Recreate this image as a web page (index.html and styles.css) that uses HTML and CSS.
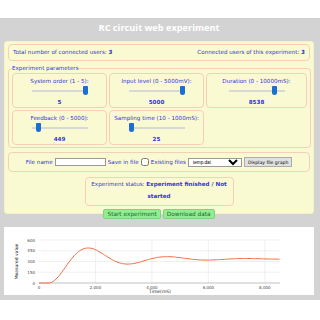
FILE: index.html
```html
<!DOCTYPE html>
<html lang="en">
<head>
    <meta charset="UTF-8">
    <title>RC circuit web experiment</title>
    <link rel="stylesheet" href="styles.css">
</head>
<body>

<div class="page">
    <h1>RC circuit web experiment</h1>

    <div class="panel">
        <div class="box users">
            <span>Total number of connected users: <b>3</b></span>
            <span>Connected users of this experiment: <b>3</b></span>
        </div>

        <fieldset class="params">
            <legend>Experiment parameters</legend>
            <div class="param-grid">
                <div class="param">
                    <label>System order (1 - 5):</label>
                    <input type="range" min="1" max="5" value="5">
                    <b>5</b>
                </div>
                <div class="param">
                    <label>Input level (0 - 5000mV):</label>
                    <input type="range" min="0" max="5000" value="5000">
                    <b>5000</b>
                </div>
                <div class="param">
                    <label>Duration (0 - 10000mS):</label>
                    <input type="range" min="0" max="10000" value="8538">
                    <b>8538</b>
                </div>
                <div class="param">
                    <label>Feedback (0 - 5000):</label>
                    <input type="range" min="0" max="5000" value="449">
                    <b>449</b>
                </div>
                <div class="param">
                    <label>Sampling time (10 - 1000mS):</label>
                    <input type="range" min="10" max="1000" value="25">
                    <b>25</b>
                </div>
            </div>
        </fieldset>

        <div class="box files">
            <label>File name</label>
            <input type="text" class="file-name">
            <label>Save in file</label>
            <input type="checkbox" class="save">
            <label>Existing files</label>
            <select class="existing"><option>temp.dat</option></select>
            <button class="show">Display file graph</button>
        </div>

        <div class="box status">
            Experiment status: <b>Experiment finished / Not started</b>
        </div>
    </div>

    <div class="actions">
        <button class="go">Start experiment</button>
        <button class="go">Download data</button>
    </div>

    <div class="chart">
        <svg id="graph" width="310" height="68" viewBox="0 0 310 68"></svg>
    </div>
</div>

<script>
    // plot area inside the svg
    const plotL = 35, plotR = 276, plotT = 13, plotB = 56;
    const tMax = 8538, yMax = 600;
    const svg = document.getElementById("graph");
    let out = "";

    function px(t) { return plotL + t / tMax * (plotR - plotL); }
    function py(v) { return plotB - v / yMax * (plotB - plotT); }

    // grid + labels
    [0, 150, 300, 450, 600].forEach(v => {
        if (v > 0) out += `<line x1="${plotL}" x2="${plotR}" y1="${py(v)}" y2="${py(v)}" class="grid"/>`;
        out += `<text x="${plotL - 4}" y="${py(v) + 1.5}" class="tick" text-anchor="end">${v}</text>`;
    });
    [0, 2000, 4000, 6000, 8000].forEach(t => {
        if (t > 0) out += `<line x1="${px(t)}" x2="${px(t)}" y1="${plotT}" y2="${plotB}" class="grid"/>`;
        out += `<text x="${px(t)}" y="${plotB + 6}" class="tick" text-anchor="middle">${t.toLocaleString("en-US")}</text>`;
    });
    out += `<line x1="${plotL}" x2="${plotR}" y1="${plotB}" y2="${plotB}" class="axis"/>`;
    out += `<text x="156" y="66" class="title" text-anchor="middle">Time(mS)</text>`;
    out += `<text transform="translate(13.5 ${(plotT + plotB) / 2}) rotate(-90)" class="title" text-anchor="middle">Measured value</text>`;

    // damped response of the circuit
    const w = Math.PI / 1400, a = 0.000555, delay = 340, final = 335;
    let d = "";
    for (let t = 0; t <= tMax; t += 40) {
        const tp = t - delay;
        const v = tp <= 0 ? 0 : final * (1 - Math.exp(-a * tp) * (Math.cos(w * tp) + a / w * Math.sin(w * tp)));
        d += (d ? " L" : "M") + px(t).toFixed(1) + " " + py(v).toFixed(1);
    }
    out += `<path d="${d}" class="curve"/>`;
    svg.innerHTML = out;
</script>

</body>
</html>
```

FILE: styles.css
```css
body {
    margin: 0;
    background: #fff;
    font-family: "DejaVu Sans", sans-serif;
    font-size: 5.6px;
    color: #3333dd;
}
.page {
    margin-top: 18px;
    background: #d3d3d3;
    padding: 0 6px 5px 4px;
}
h1 {
    margin: 0;
    height: 23px;
    line-height: 19px;
    font-family: "Open Sans", sans-serif;
    font-size: 9.2px;
    font-weight: bold;
    color: #fff;
    text-align: center;
}
.panel {
    background: #fafad2;
    border: 1px solid #f3f3c4;
    border-radius: 3px;
    padding: 2px 3px 7px 3px;
}
.box {
    border: 1px solid #f7cfb8;
    border-radius: 4px;
}
.users {
    display: flex;
    justify-content: space-between;
    padding: 4px 4px;
    height: 7px;
    line-height: 7px;
}
.params {
    margin: 4px 0 0 0;
    padding: 2px 3px 2px 3px;
    border: 1px solid #f7cfb8;
    border-radius: 4px;
}
.params legend {
    padding: 0;
    line-height: 6px;
}
.param-grid {
    display: grid;
    grid-template-columns: 95px 95px 101px;
    gap: 2px;
}
.param {
    border: 1px solid #f7cfb8;
    border-radius: 4px;
    height: 35px;
    display: flex;
    flex-direction: column;
    align-items: center;
    padding-top: 4px;
    box-sizing: border-box;
}
.param label {
    line-height: 7px;
}
.param b {
    line-height: 8px;
}
input[type=range] {
    -webkit-appearance: none;
    appearance: none;
    width: 56px;
    height: 10px;
    margin: 1px 0 2px 0;
    background: transparent;
}
input[type=range]::-webkit-slider-runnable-track {
    height: 2px;
    background: #d8d8d8;
}
input[type=range]::-webkit-slider-thumb {
    -webkit-appearance: none;
    width: 5px;
    height: 9px;
    margin-top: -4px;
    background: #1a6fd1;
    border-radius: 1px 1px 3px 3px;
}
.files {
    margin-top: 4px;
    height: 18px;
    display: flex;
    align-items: center;
    justify-content: center;
    gap: 2px;
}
.file-name {
    width: 49px;
    height: 6px;
    border: 1px solid #999;
    padding: 0;
}
.save {
    width: 8px;
    height: 8px;
    margin: 0;
}
.existing {
    width: 54px;
    height: 9px;
    font-size: 4.6px;
    padding: 0;
    border: 1px solid #999;
    background: #fff;
}
.show {
    height: 10px;
    padding: 0 3px;
    font-size: 4.6px;
    font-family: "DejaVu Sans", sans-serif;
    background: #e1e1e1;
    border: 1px solid #adadad;
    color: #000;
}
.status {
    width: 147px;
    margin: 5px auto 0 auto;
    padding: 0 0 3px 0;
    text-align: center;
    line-height: 12px;
    font-size: 5.6px;
}
.actions {
    display: flex;
    justify-content: center;
    gap: 2px;
    margin-top: -5px;
}
.go {
    height: 10px;
    padding: 0 3px;
    font-family: "DejaVu Sans", sans-serif;
    font-size: 5.8px;
    line-height: 8px;
    background: #90ee90;
    border: 1px solid #7fd27f;
    border-radius: 2px;
    color: #2f5f2f;
}
.chart {
    margin-top: 8px;
    background: #fff;
    height: 68px;
}
#graph .grid {
    stroke: #e6e6e6;
    stroke-width: 0.6;
}
#graph .axis {
    stroke: #999;
    stroke-width: 0.6;
}
#graph .tick {
    font-family: "DejaVu Sans", sans-serif;
    font-size: 4px;
    fill: #444;
}
#graph .title {
    font-family: "DejaVu Sans", sans-serif;
    font-size: 4.5px;
    fill: #222;
}
#graph .curve {
    fill: none;
    stroke: #ef6a3f;
    stroke-width: 1;
}
```
